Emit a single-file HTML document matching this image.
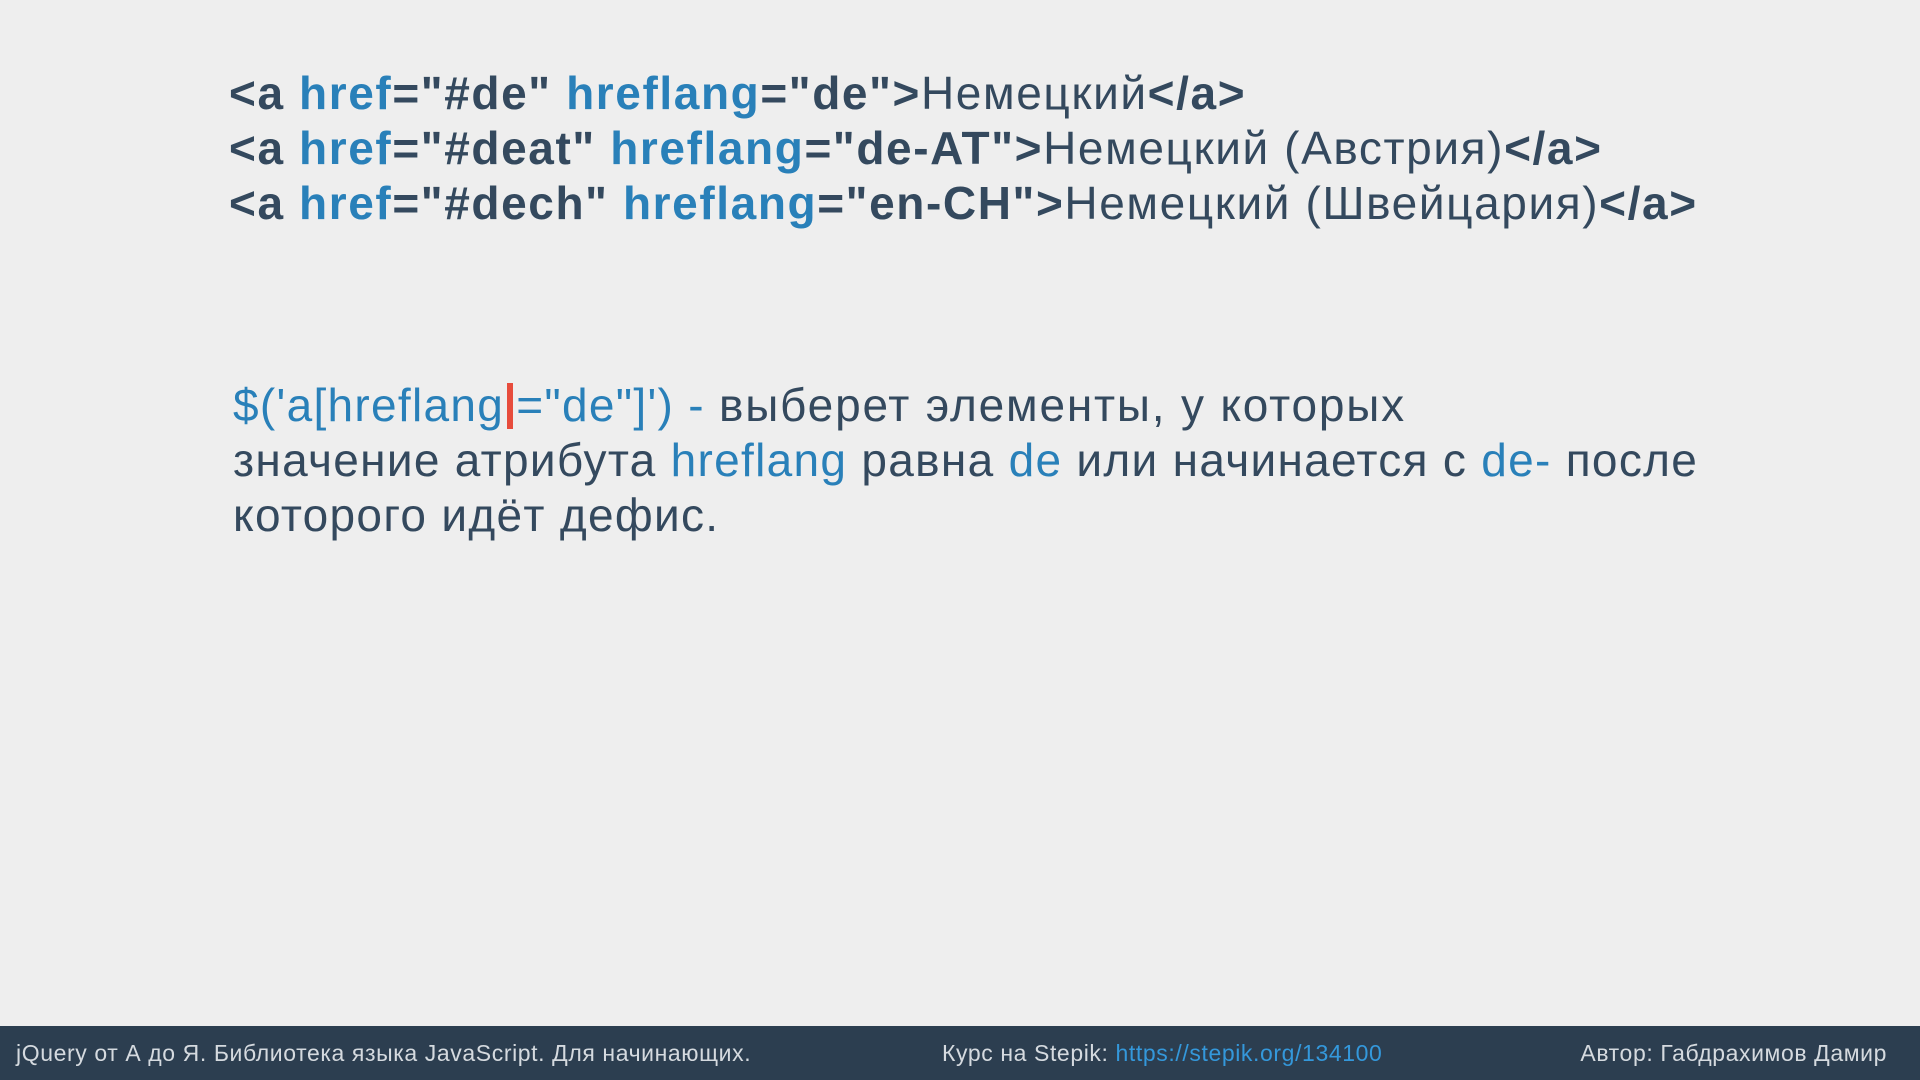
<!DOCTYPE html>
<html><head><meta charset="utf-8"><style>
body{margin:0;width:1920px;height:1080px;background:#eeeeee;position:relative;overflow:hidden;font-family:"Liberation Sans","DejaVu Sans",sans-serif;color:#34495e}
.code{position:absolute;left:229px;top:66px;font-size:46px;font-weight:bold;line-height:55px;white-space:nowrap;letter-spacing:1.6px}
.code .n{font-weight:normal}
.b{color:#2980b9}
.p{position:absolute;left:233px;top:378px;font-size:46px;line-height:55px;white-space:nowrap;letter-spacing:1.3px}
.r{display:inline-block;width:6px;height:46px;background:#e74c3c;vertical-align:-8px;margin:0 3px}
.foot{position:absolute;left:0;top:1026px;width:1920px;height:54px;background:#2c3e50;color:#d5dadf;font-size:23px;line-height:54px;letter-spacing:0.6px}
.foot span{position:absolute;top:0;white-space:nowrap}
.foot a{color:#3498db;text-decoration:none}
</style></head><body>
<div class="code">
<div>&lt;a <span class="b">href</span>="#de" <span class="b">hreflang</span>="de"&gt;<span class="n">Немецкий</span>&lt;/a&gt;</div>
<div>&lt;a <span class="b">href</span>="#deat" <span class="b">hreflang</span>="de-AT"&gt;<span class="n">Немецкий (Австрия)</span>&lt;/a&gt;</div>
<div>&lt;a <span class="b">href</span>="#dech" <span class="b">hreflang</span>="en-CH"&gt;<span class="n">Немецкий (Швейцария)</span>&lt;/a&gt;</div>
</div>
<div class="p">
<div><span class="b">$('a[hreflang<span class="r"></span>="de"]') -</span> <span style="letter-spacing:1.8px">выберет элементы, у которых</span></div>
<div>значение атрибута <span class="b">hreflang</span> равна <span class="b">de</span> или начинается с <span class="b">de-</span> после</div>
<div>которого идёт дефис.</div>
</div>
<div class="foot">
<span style="left:16px">jQuery от А до Я. Библиотека языка JavaScript. Для начинающих.</span>
<span style="left:942px">Курс на Stepik: <a>https://stepik.org/134100</a></span>
<span style="right:33px">Автор: Габдрахимов Дамир</span>
</div>
</body></html>
